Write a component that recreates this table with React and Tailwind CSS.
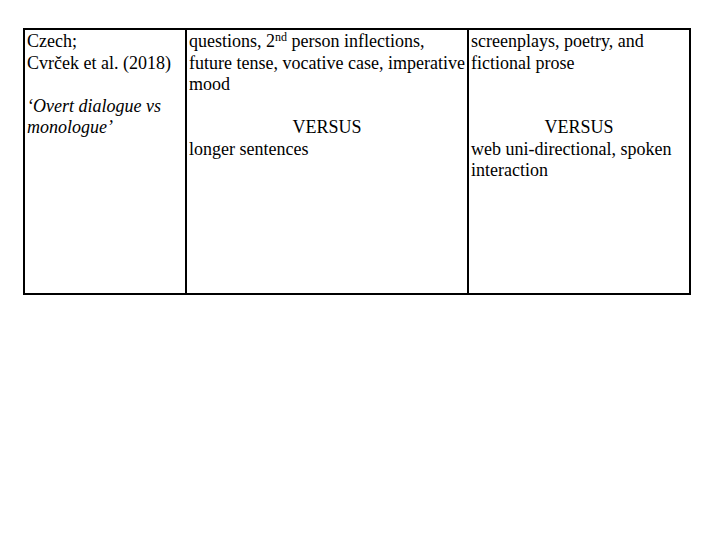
const Cell = ({ children, className = "" }) => (
  <div className={"px-[2px] pt-[1px] " + className}>{children}</div>
);

const App = () => {
  return (
    <div className="w-[720px] h-[540px] bg-white pt-[28px] pl-[23px]">
      <div className="w-[668px] h-[267px] border-2 border-black grid grid-cols-[160px_282px_1fr] font-['Liberation_Serif','Times_New_Roman',serif] text-[18px] leading-[21.5px] text-black">
        <Cell>
          <p>Czech;</p>
          <p>Cvrček et al. (2018)</p>
          <p className="h-[21.5px]"></p>
          <p className="italic">‘Overt dialogue vs</p>
          <p className="italic">monologue’</p>
        </Cell>
        <Cell className="border-l-2 border-black">
          <p>
            questions, 2<sup className="text-[12px]">nd</sup> person
            inflections,
          </p>
          <p className="whitespace-nowrap">future tense, vocative case, imperative</p>
          <p>mood</p>
          <p className="h-[21.5px]"></p>
          <p className="text-center">VERSUS</p>
          <p>longer sentences</p>
        </Cell>
        <Cell className="border-l-2 border-black">
          <p>screenplays, poetry, and</p>
          <p>fictional prose</p>
          <p className="h-[21.5px]"></p>
          <p className="h-[21.5px]"></p>
          <p className="text-center">VERSUS</p>
          <p>web uni-directional, spoken</p>
          <p>interaction</p>
        </Cell>
      </div>
    </div>
  );
};

export default App;
